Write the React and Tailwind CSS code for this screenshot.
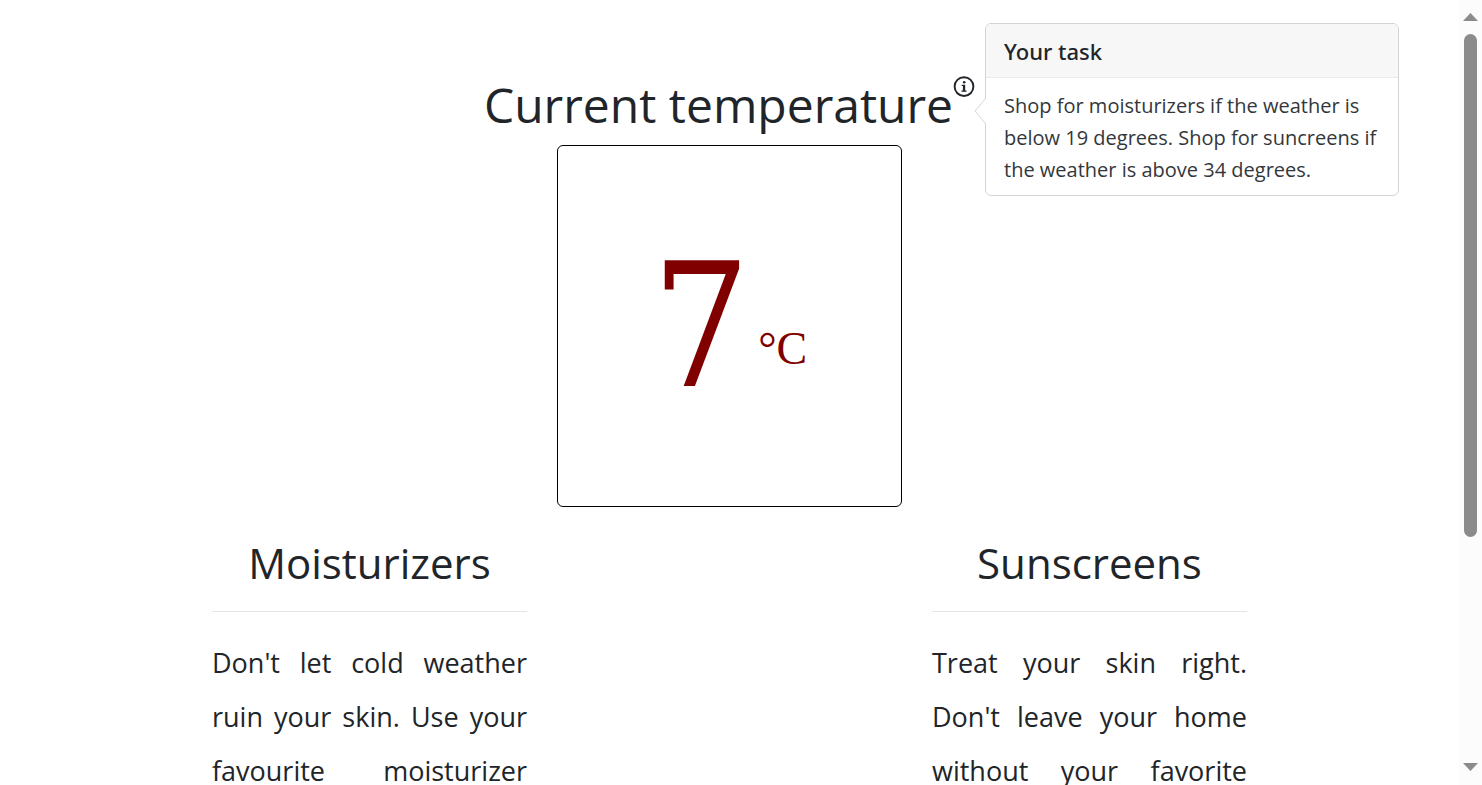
const products = [
  {
    title: 'Moisturizers',
    text: "Don't let cold weather ruin your skin. Use your favourite moisturizer",
  },
  {
    title: 'Sunscreens',
    text: "Treat your skin right. Don't leave your home without your favorite",
  },
];

function InfoIcon() {
  return (
    <svg viewBox="0 0 22 22" className="block size-[22px]" aria-hidden="true">
      <circle cx="11" cy="10.6" r="9.4" fill="none" stroke="#212529" strokeWidth="1.9" />
      <circle cx="11.2" cy="6.2" r="1.3" fill="#212529" />
      <path d="M8.7 8.8h3.5v5.8h1.3v1.1H8.5v-1.1h1.4V9.9H8.7z" fill="#212529" />
    </svg>
  );
}

function TaskPopover() {
  return (
    <div
      role="tooltip"
      className="absolute top-[-53px] left-full ml-2.5 w-[414px] rounded-[6px] border border-[#d4d4d4] bg-white text-left"
    >
      <svg viewBox="0 0 12 26" className="absolute top-[74px] left-[-12px] h-[26px] w-3" aria-hidden="true">
        <path d="M12 0L1 13L12 26" fill="#fff" stroke="#d4d4d4" />
      </svg>
      <h3 className="rounded-t-[5px] border-b border-[#ebebeb] bg-[#f7f7f7] px-[18px] pt-3 pb-[11px] font-['Noto_Sans',sans-serif] text-[22px] leading-[30px] font-medium">
        Your task
      </h3>
      <p className="px-[18px] pt-3 pb-[9px] text-[20px] leading-8 text-[#33373b]">
        Shop for moisturizers if the weather is below 19 degrees. Shop for suncreens if the weather is above 34 degrees.
      </p>
    </div>
  );
}

function ScrollRail() {
  return (
    <div className="flex w-[23px] shrink-0 flex-col items-center bg-[#fcfcfc] pt-[13px] pb-3.5" aria-hidden="true">
      <svg viewBox="0 0 15 8" className="h-2 w-[15px] shrink-0">
        <path d="M7.5 0L15 8H0z" fill="#8b8b8b" />
      </svg>
      <div className="flex w-[13px] flex-1 flex-col pt-[13px]">
        <div className="h-[69%] rounded-full bg-[#8b8b8b]" />
      </div>
      <svg viewBox="0 0 15 8" className="h-2 w-[15px] shrink-0">
        <path d="M0 0H15L7.5 8z" fill="#8b8b8b" />
      </svg>
    </div>
  );
}

export default function App() {
  return (
    <div className="flex h-screen overflow-hidden bg-white font-['Open_Sans',sans-serif] text-[#212529]">
      <main className="flex-1 pt-[76px]">
        <header className="flex justify-center">
          <div className="relative flex items-start">
            <h1 className="text-[48px] leading-[58px]">Current temperature</h1>
            <button type="button" aria-label="Your task">
              <InfoIcon />
            </button>
            <TaskPopover />
          </div>
        </header>
        <section className="mx-auto mt-[11px] flex h-[362px] w-[345px] items-center justify-center rounded-[6px] border border-black text-[#800000]">
          <p className="flex items-center gap-2 pt-0.5">
            <span className="font-['DejaVu_Serif_Condensed','DejaVu_Serif',serif] text-[172px] leading-none">7</span>
            <span className="pt-11 font-['Liberation_Serif',serif] text-[46px] leading-none">°C</span>
          </p>
        </section>
        <div className="mx-auto flex max-w-[1079px] justify-between px-[22px] pt-[29px]">
          {products.map((p) => (
            <section key={p.title} className="w-[315px]">
              <h2 className="border-b border-[#e5e5e5] pb-[21px] text-center text-[42px] leading-[54px]">{p.title}</h2>
              <p className="pt-6 text-justify text-[27px] leading-[54px] [text-align-last:justify]">{p.text}</p>
            </section>
          ))}
        </div>
      </main>
      <ScrollRail />
    </div>
  );
}
